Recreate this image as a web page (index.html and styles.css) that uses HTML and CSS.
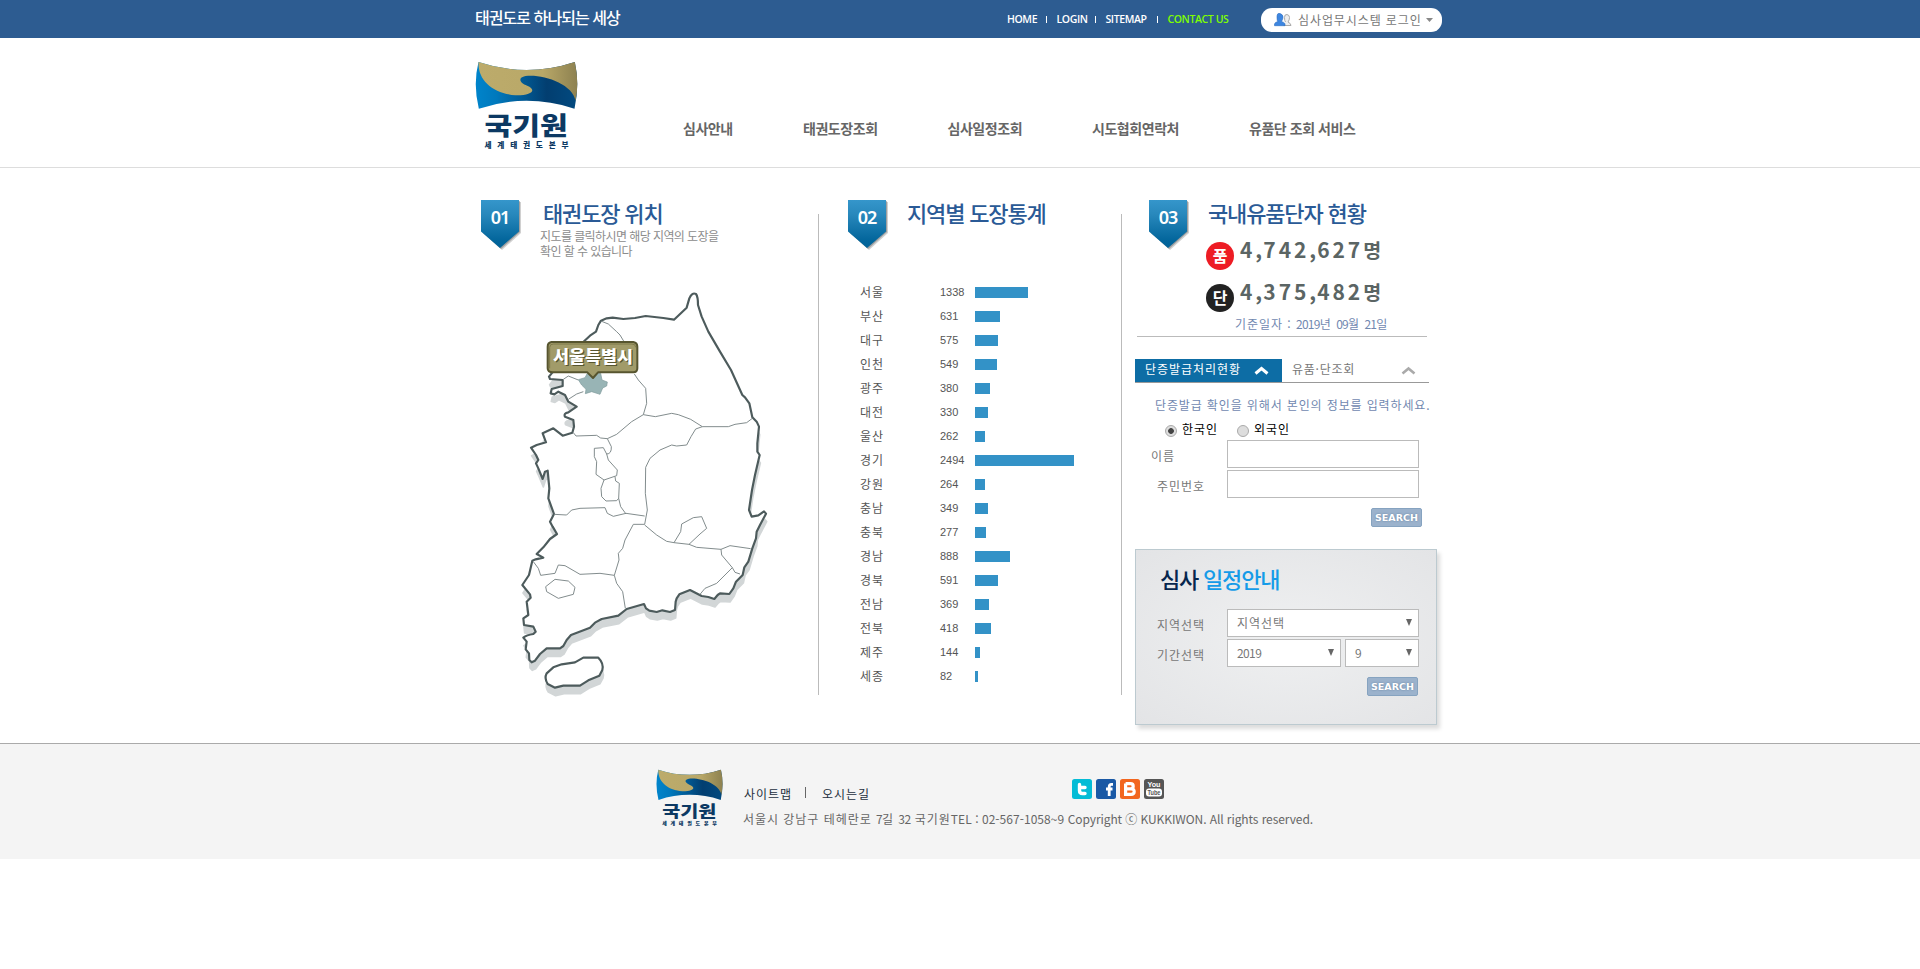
FILE: index.html
```html
<!DOCTYPE html>
<html lang="ko">
<head>
<meta charset="utf-8">
<title>국기원</title>
<link rel="stylesheet" href="styles.css">
</head>
<body>
<svg class="defs" width="0" height="0" aria-hidden="true">
  <defs>
    <linearGradient id="blue" x1="0" x2="1"><stop offset="0" stop-color="#0084cb"/><stop offset=".2" stop-color="#0079bd"/><stop offset=".7" stop-color="#023e70"/><stop offset="1" stop-color="#024a80"/></linearGradient>
    <linearGradient id="gold" x1="0" x2="1"><stop offset="0" stop-color="#bcab6b"/><stop offset=".65" stop-color="#b9a868"/><stop offset="1" stop-color="#8d8150"/></linearGradient>
    <linearGradient id="badge" x1="0" x2="0" y1="0" y2="1"><stop offset="0" stop-color="#3596cb"/><stop offset=".3" stop-color="#2888bc"/><stop offset=".85" stop-color="#02659b"/><stop offset="1" stop-color="#016398"/></linearGradient>
    <symbol id="logo" viewBox="44 184 308 264">
      <path fill="url(#blue)" d="M54 187Q198 235 343 187Q358 255 342 327Q198 280 55 327Q37 255 54 187Z"/>
      <path fill="url(#gold)" d="M54 187Q198 235 343 187Q357 250 345 303C337 252 245 222 195 229C170 234 178 250 200 258C230 270 215 288 165 287C100 281 52 245 54 187Z"/>
      <text class="logo-name" x="72" y="407" textLength="250" lengthAdjust="spacingAndGlyphs">국기원</text>
      <text class="logo-sub" x="72" y="445" textLength="252">세계태권도본부</text>
    </symbol>
    <symbol id="flag" viewBox="0 0 40 50">
      <path fill="#777" opacity=".35" d="M2 2H40V33L21 50L2 33Z"/>
      <path fill="#555" opacity=".4" d="M1 1H39V32L20 49L1 32Z"/>
      <path fill="url(#badge)" d="M0 0H38V31.500L19 48L0 31.500Z"/>
    </symbol>
  </defs>
</svg>

<div class="topbar">
  <div class="wrap topbar-in">
    <p class="tagline">태권도로 하나되는 세상</p>
    <ul class="util">
      <li class="u-home">HOME</li><li class="bar"></li><li class="u-login">LOGIN</li><li class="bar"></li><li class="u-site">SITEMAP</li><li class="bar"></li><li class="u-contact">CONTACT US</li>
    </ul>
    <div class="pill">
      <svg width="18" height="14" viewBox="0 0 18 14"><path fill="#eee" stroke="#aaa" d="M9.500 12.500h7.500q0-2-3-3.500q1.500-2 1.500-4.500t-2.500-3t-2.500 3t1 4.500"/><path fill="#3d86e0" stroke="#2a6cc0" stroke-width=".6" d="M.5 12.700h10.500v-2q-1-1.500-3.500-2.200q1.500-2 1.500-4.500T6 .5t-3 3.500t1 4.500q-3 .5-3.500 2.500z"/></svg>
      <span>심사업무시스템 로그인</span>
      <svg class="pill-arrow" width="7" height="4" viewBox="0 0 7 4"><path fill="#888" d="M0 0h7L3.500 4z"/></svg>
    </div>
  </div>
</div>

<header class="header">
  <div class="wrap header-in">
    <svg class="logo" width="103" height="88"><use href="#logo"/></svg>
    <nav class="nav">
      <a class="n1">심사안내</a><a class="n2">태권도장조회</a><a class="n3">심사일정조회</a><a class="n4">시도협회연락처</a><a class="n5">유품단 조회 서비스</a>
    </nav>
  </div>
</header>

<main class="wrap main">
  <section class="col-map">
    <div class="head">
      <div class="flag"><svg width="40" height="50"><use href="#flag"/></svg><b>01</b></div>
      <div class="head-text">
        <h2 class="h-map">태권도장 위치</h2>
        <p class="desc">지도를 클릭하시면 해당 지역의 도장을<br>확인 할 수 있습니다</p>
      </div>
    </div>
    <svg class="map" width="300" height="430" viewBox="0 0 900 1290">
      <defs>
        <path id="land" d="M253 183L270 167L288 155L295 135L303 122L320 115L338 113L370 117L405 114L437 108L490 114L522 119L560 83L568 55Q576 36 588 42Q594 50 594 75L605 110L625 155L660 215L693 270L727 345L735 352L748 370L757 412L770 425L777 440L772 490L772 515L779 525L765 585L756 630L747 690L755 710L775 706L792 694L798 701L780 735L770 755L768 775L757 805L745 845L733 862L728 885L708 905L700 925L688 942L660 940L653 945L643 957L625 951L605 948L570 930L538 943L530 955L527 965L525 990L510 996L487 991L470 996L448 992L438 985L432 972L380 987L355 1007L305 1017L285 1028L270 1043L213 1065L200 1080L190 1098L180 1105L140 1105L120 1122L105 1142L95 1147L88 1140L87 1120L77 1108L80 1085L70 1073Q80 1065 100 1062L107 1055L100 1040L72 1035L70 1015L85 1005L80 965L92 953L90 943L67 915L87 885L97 842L107 838L130 833L110 822L130 802L150 777L171 762L158 740L150 725L162 702L145 655L148 625L143 572L135 575L128 597L115 565L108 550L115 540L108 525L93 503L110 495L138 487L128 460L160 445L188 467L217 458L222 440L220 420L195 410Q190 400 205 397L230 380L205 365L195 345L175 335L163 343L152 340L155 327L188 318L188 300L150 297L147 290L155 280Z"/>
        <path id="jeju" d="M140 1180L160 1162L185 1153L225 1147L250 1133L295 1133Q312 1150 307 1170L298 1187L265 1201L240 1217L190 1217L165 1223L143 1212Q132 1195 140 1180Z"/>
      </defs>
      <g fill="#d2d6d7" stroke="#d2d6d7" stroke-width="5" stroke-linejoin="round" transform="translate(2 24)"><use href="#land"/><use href="#jeju"/></g>
      <g fill="#fff" stroke="#4d5b5c" stroke-width="6.500" stroke-linejoin="round"><use href="#land"/><use href="#jeju"/></g>
      <g fill="none" stroke="#788384" stroke-width="2.800" stroke-linejoin="round">
        <path d="M305 124L325 132L350 155L360 165L372 185M403 282L415 300L437 325L440 370L430 404L466 410L515 400L535 404L572 418L607 440L685 440L705 433L740 428L757 415"/>
        <path d="M430 404L395 425L350 463L322 476L302 474L290 466L228 468L220 458M607 440L587 447L573 470L560 495L530 498L515 495L480 510L450 535L437 562L436 640L442 690L434 733"/>
        <path d="M322 476L334 500Q335 522 320 522L325 540L352 570L350 587L312 600L288 583L290 545L283 530L283 505L310 503L320 522M312 600L303 625L305 650L318 663L350 662L356 655M345 590L347 603L358 610L356 655L362 680L378 702"/>
        <path d="M162 703L200 705L215 690L240 685L315 683L322 700L340 709L378 700L434 708M434 733L400 733L375 780L368 805L355 820L357 840L343 886L350 910L368 935L376 985"/>
        <path d="M100 845L115 865L122 886L165 880L175 855L195 857L240 883L300 880L343 886M434 735L470 765L500 784L522 788L567 793L590 802L663 808L690 797L752 806M522 788L542 755L545 732L580 713L605 710L620 745L600 762L567 793"/>
        <path d="M663 808L665 825L697 863L705 877L720 882M697 863L650 910L615 925L600 943M165 898L205 903L225 922L220 943L175 955L140 935L137 920ZM190 298L205 288L235 300M205 358L230 342L250 335"/>
      </g>
      <path fill="#98b4b5" stroke="#7d989a" stroke-width="2" d="M235 299L255 293L262 280H302L306 300L322 306L320 318L308 324L300 343L275 335L256 341L258 328L245 315Z"/>
      <path fill="#a19b69" stroke="#57552f" stroke-width="6" stroke-linejoin="round" d="M154 186H400Q412 188 412 200V265Q412 277 400 277H294L279 294L262 277H158Q143 277 143 265V200Q143 188 154 186Z"/>
      <path fill="none" stroke="#7d7848" stroke-width="3" d="M149 265V202Q149 192 160 192H396Q407 192 407 202"/>
      <text class="map-tip shade" x="163" y="252" textLength="240" lengthAdjust="spacingAndGlyphs" aria-hidden="true">서울특별시</text>
      <text class="map-tip" x="159" y="248" textLength="240" lengthAdjust="spacingAndGlyphs">서울특별시</text>
    </svg>
  </section>

  <div class="divider"></div>

  <section class="col-stat">
    <div class="head">
      <div class="flag"><svg width="40" height="50"><use href="#flag"/></svg><b>02</b></div>
      <h2 class="h-stat">지역별 도장통계</h2>
    </div>
    <ul class="stats">
      <li><span>서울</span><em>1338</em><i style="width:53px"></i></li>
      <li><span>부산</span><em>631</em><i style="width:25px"></i></li>
      <li><span>대구</span><em>575</em><i style="width:23px"></i></li>
      <li><span>인천</span><em>549</em><i style="width:22px"></i></li>
      <li><span>광주</span><em>380</em><i style="width:15px"></i></li>
      <li><span>대전</span><em>330</em><i style="width:13px"></i></li>
      <li><span>울산</span><em>262</em><i style="width:10px"></i></li>
      <li><span>경기</span><em>2494</em><i style="width:99px"></i></li>
      <li><span>강원</span><em>264</em><i style="width:10px"></i></li>
      <li><span>충남</span><em>349</em><i style="width:13px"></i></li>
      <li><span>충북</span><em>277</em><i style="width:11px"></i></li>
      <li><span>경남</span><em>888</em><i style="width:35px"></i></li>
      <li><span>경북</span><em>591</em><i style="width:23px"></i></li>
      <li><span>전남</span><em>369</em><i style="width:14px"></i></li>
      <li><span>전북</span><em>418</em><i style="width:16px"></i></li>
      <li><span>제주</span><em>144</em><i style="width:5px"></i></li>
      <li><span>세종</span><em>82</em><i style="width:3px"></i></li>
    </ul>
  </section>

  <div class="divider"></div>

  <section class="col-info">
    <div class="head">
      <div class="flag"><svg width="40" height="50"><use href="#flag"/></svg><b>03</b></div>
      <div class="head-text">
        <h2 class="h-info">국내유품단자 현황</h2>
        <div class="total"><span class="dot red">품</span><strong>4<s>,</s>742<s>,</s>627<b>명</b></strong></div>
        <div class="total"><span class="dot black">단</span><strong>4<s>,</s>375<s>,</s>482<b>명</b></strong></div>
      </div>
    </div>
    <p class="date">기준일자 : <span>2019</span>년 <span>09</span>월 <span>21</span>일</p>

    <div class="tabs">
      <div class="tab on"><span>단증발급처리현황</span><svg width="15" height="9" viewBox="0 0 15 9"><path fill="none" stroke="#fff" stroke-width="3" d="M1.500 7.500L7.500 2.500L13.500 7.500"/></svg></div>
      <div class="tab"><span class="t2">유품·단조회</span><svg width="15" height="9" viewBox="0 0 15 9"><path fill="none" stroke="#aaa" stroke-width="2.600" d="M1.500 7.500L7.500 2.500L13.500 7.500"/></svg></div>
    </div>
    <p class="notice">단증발급 확인을 위해서 본인의 정보를 입력하세요.</p>
    <div class="radios"><span class="radio checked"></span><label>한국인</label><span class="radio"></span><label>외국인</label></div>
    <div class="field"><label class="l-name">이름</label><div class="box w192"></div></div>
    <div class="field"><label>주민번호</label><div class="box w192"></div></div>
    <div class="search s1">SEARCH</div>

    <div class="panel">
      <h3><b>심사</b> 일정안내</h3>
      <div class="field"><label>지역선택</label><div class="box w192 sel">지역선택<svg width="6" height="7"><path d="M0 0h6L3 7z"/></svg></div></div>
      <div class="field"><label>기간선택</label><div class="box w114 sel"><span>2019</span><svg width="6" height="7"><path d="M0 0h6L3 7z"/></svg></div><div class="box w74 sel"><span>9</span><svg width="6" height="7"><path d="M0 0h6L3 7z"/></svg></div></div>
      <div class="search s2">SEARCH</div>
    </div>
  </section>
</main>

<footer class="footer">
  <div class="footer-in">
    <svg class="flogo" width="67" height="57" viewBox="0 0 103 88" preserveAspectRatio="none"><use href="#logo" width="103" height="88"/></svg>
    <div class="finfo">
      <div class="frow">
        <div class="flinks"><a>사이트맵</a><i></i><a>오시는길</a></div>
        <div class="sns">
          <svg width="20" height="20"><rect width="20" height="20" rx="2.500" fill="#04bcd6"/><path fill="none" stroke="#fff" stroke-width="3.400" stroke-linecap="round" d="M7.500 5.500V11.500Q7.500 14.500 10.500 14.500H13M7.500 8.500H13"/></svg>
          <svg width="20" height="20"><rect width="20" height="20" rx="2.500" fill="#1a59a5"/><path fill="none" stroke="#fff" stroke-width="2.800" d="M17 5.400H15.500Q13.200 5.400 13.200 8V17M10 10H16.500"/></svg>
          <svg width="20" height="20"><rect width="20" height="20" rx="2.500" fill="#f2661f"/><path fill="none" stroke="#fff" stroke-width="3.200" d="M5.600 4.600V15.400H11Q14.200 15.400 14.200 12.600T11 9.900H5.600M5.600 4.600H10.500Q13.200 4.600 13.200 7.200T10.500 9.900"/></svg>
          <svg width="20" height="20" overflow="visible"><rect width="20" height="20" rx="2.500" fill="#555"/><rect x="2" y="9.500" width="16" height="8" rx="3" fill="#fff"/><text class="yt" x="3.500" y="8.300" textLength="13" lengthAdjust="spacingAndGlyphs" fill="#fff">You</text><text class="yt" x="3.500" y="16" textLength="13" lengthAdjust="spacingAndGlyphs" fill="#555">Tube</text></svg>
        </div>
      </div>
      <p class="addr">서울시 강남구 테헤란로 <span>7</span>길 <span>32</span> 국기원<span class="lat">TEL : 02-567-1058~9 </span><span class="copy">Copyright ⓒ KUKKIWON. All rights reserved.</span></p>
    </div>
  </div>
</footer>
</body>
</html>
```
FILE: styles.css
```css
* { box-sizing: border-box; margin: 0; padding: 0; }
body {
  background: #fff;
  color: #666;
  font: 12px/16px "Noto Sans CJK KR", sans-serif;
  letter-spacing: .96px;
}
ul { list-style: none; }
i, em { font-style: normal; }
svg { display: block; flex: none; }
.defs { position: absolute; }
.wrap { width: 970px; margin: 0 auto; }

.topbar { height: 38px; background: #2d5c91; }
.topbar-in { display: flex; height: 38px; white-space: nowrap; }
.tagline { width: 532px; color: #fff; font-size: 16px; font-weight: 500; line-height: 34px; letter-spacing: -.95px; }
.util { display: flex; width: 254px; align-items: center; color: #fff; font: 600 10.500px/38px "Open Sans", sans-serif; letter-spacing: -.4px; }
.util .bar { width: 1.500px; height: 7px; background: #fff; margin: 0 9.500px 0 8.500px; }
.u-home { width: 30px; }
.u-login { width: 29.500px; }
.u-site { width: 42.500px; }
.u-contact { color: #7fff00; }
.pill { display: flex; align-items: center; width: 181px; height: 24px; margin-top: 7.500px; padding-left: 13px; background: #fff; border-radius: 11px; color: #777; }
.pill span { width: 127px; margin-left: 6px; line-height: 22px; letter-spacing: .9px; }
.pill-arrow { margin-left: 1px; }

.header { height: 130px; border-bottom: 1px solid #ddd; }
.header-in { display: flex; padding-top: 23px; }
.nav { display: flex; padding: 55px 0 0 105px; color: #666; font-size: 14px; font-weight: 700; line-height: 24px; letter-spacing: -.45px; white-space: nowrap; }
.n1 { width: 120px; }
.n2, .n3 { width: 144.500px; }
.n4 { width: 157px; }
.logo-name { font: 900 76px "Noto Sans CJK KR", sans-serif; fill: #0c3963; letter-spacing: 0; }
.logo-sub { font: 900 23px "Noto Sans CJK KR", sans-serif; fill: #0c3963; letter-spacing: 0; }

.main { display: flex; height: 575px; }
.divider { flex: none; width: 1px; height: 481px; margin-top: 46px; background: #bbb; }
.head { display: flex; padding-top: 32px; height: 118px; }
.flag { display: grid; width: 40px; height: 50px; }
.flag > * { grid-area: 1 / 1; }
.flag b { z-index: 1; width: 38px; color: #fff; font: 600 18px/35px "Noto Sans", sans-serif; letter-spacing: -1px; text-align: center; }
h2 { height: 28px; color: #2a5a96; font-size: 22px; font-weight: 500; line-height: 24px; letter-spacing: -1.150px; white-space: nowrap; }

.col-map { width: 343px; padding-left: 6px; }
.h-map { margin-left: 22px; }
.desc { margin: 0 0 0 19px; color: #8c8c8c; line-height: 15px; letter-spacing: -.58px; white-space: nowrap; }
.map { margin: -6px 0 0 19px; }
.map-tip { font: 900 50px "Noto Sans CJK KR", sans-serif; fill: #fff; letter-spacing: 0; }
.shade { fill: #57552f; }

.col-stat { width: 302px; padding-left: 29px; }
.h-stat { margin-left: 19px; }
.stats { padding-left: 12px; margin-top: -6px; color: #555; }
.stats li { display: flex; align-items: center; height: 24px; line-height: 24px; }
.stats span { width: 80px; }
.stats em { width: 35px; font: 11px/24px "Liberation Sans", sans-serif; letter-spacing: 0; }
.stats i { height: 11px; background: #3392c7; }

.col-info { width: 320px; padding-left: 13px; }
.col-info .head { height: 148px; padding-left: 14px; }
.h-info { margin-left: 19px; }
.total { display: flex; height: 42px; margin: 0 0 0 17px; white-space: nowrap; }
.dot { width: 28px; height: 28px; margin-top: 14px; border-radius: 50%; color: #fff; font-size: 16px; font-weight: 700; line-height: 26px; letter-spacing: 0; text-align: center; }
.red { background: #ed1c24; }
.black { background: #222; }
.total strong { margin-left: 6px; color: #5b6564; font: 700 21px/42px "Noto Sans CJK KR", sans-serif; letter-spacing: 2.900px; }
.total s { text-decoration: none; letter-spacing: 1.200px; }
.total b { font-size: 19.500px; font-weight: 700; letter-spacing: 0; }
.date { width: 290px; height: 21px; margin-left: 2px; padding-left: 98px; border-bottom: 1px solid #bbb; color: #7188b0; line-height: 15px; white-space: nowrap; }
.date span { letter-spacing: -.7px; }
.tabs { display: flex; width: 294px; height: 24px; margin-top: 22px; border-bottom: 1px solid #999; }
.tab { display: flex; width: 147px; justify-content: space-between; padding: 0 13px 0 10px; line-height: 20px; white-space: nowrap; color: #777; }
.tab svg { margin-top: 7px; }
.tab.on { background: #0d6da5; color: #fff; }
.t2 { letter-spacing: .75px; }
.notice { margin: 14px 0 0 20px; color: #7188b0; line-height: 16px; letter-spacing: .87px; white-space: nowrap; }
.radios { display: flex; height: 27px; padding: 8px 0 0 30px; color: #000; line-height: 16px; }
.radio { width: 12px; height: 12px; margin: 4px 5px 0 0; border: 1px solid #aaa; border-radius: 50%; background: #ddd; }
.radio.checked { background: radial-gradient(circle, #444 0 2.500px, #ddd 3.200px); }
.radios label { width: 55px; }
.field { display: flex; height: 30px; color: #777; white-space: nowrap; }
.field label { width: 70px; margin: 8px 0 0 22px; }
.field .l-name { width: 76px; margin-left: 16px; }
.box { height: 28px; border: 1px solid #bbb; background: #fff; }
.w192 { width: 192px; }
.w114 { width: 114px; }
.w74 { width: 74px; margin-left: 4px; }
.sel { display: flex; justify-content: space-between; padding: 0 6px 0 9px; line-height: 26px; }
.sel span { letter-spacing: -.6px; }
.sel svg { margin-top: 9px; fill: #666; }
.search { width: 51px; height: 19px; border: 1px solid #86a3c0; border-radius: 2px; background: #9bb2cc; color: #fff; font: 700 9.500px/17px "DejaVu Sans", sans-serif; letter-spacing: 0; text-align: center; text-shadow: 0 0 2px #5f7d9c; }
.s1 { margin: 8px 0 0 236px; }
.panel { width: 302px; height: 176px; margin-top: 22px; border: 1px solid #bccad0; background: radial-gradient(ellipse, #eff0f1, #e3e4e6); box-shadow: 3px 4px 4px #ddd; }
.panel h3 { height: 59px; padding: 13px 0 0 24px; color: #159be8; font-size: 22px; font-weight: 500; line-height: 30px; letter-spacing: -1.200px; }
.panel h3 b { color: #06264d; font-weight: 500; }
.panel .field label { margin-left: 21px; margin-top: 8px; }
.s2 { margin: 8px 0 0 231px; }

.footer { height: 116px; border-top: 1px solid #aaa; background: #f4f4f4; }
.footer-in { display: flex; width: 970px; margin: 0 auto; padding: 25px 0 0 181px; }
.finfo { padding-left: 20px; }
.frow { display: flex; padding-top: 10px; height: 41px; }
.flinks { display: flex; width: 329px; padding-left: 1px; color: #253040; line-height: 29px; white-space: nowrap; }
.flinks a { width: 48px; }
.flinks i { width: 1px; height: 11px; margin: 8px 16px 0 13px; background: #666; }
.sns { display: flex; gap: 4px; }
.yt { font: 700 7px "Liberation Sans", sans-serif; letter-spacing: 0; }
.addr { color: #666; line-height: 18px; white-space: nowrap; }
.addr span { letter-spacing: -.6px; }
.addr .lat { letter-spacing: .05px; }
.addr .copy { letter-spacing: -.08px; }
```
